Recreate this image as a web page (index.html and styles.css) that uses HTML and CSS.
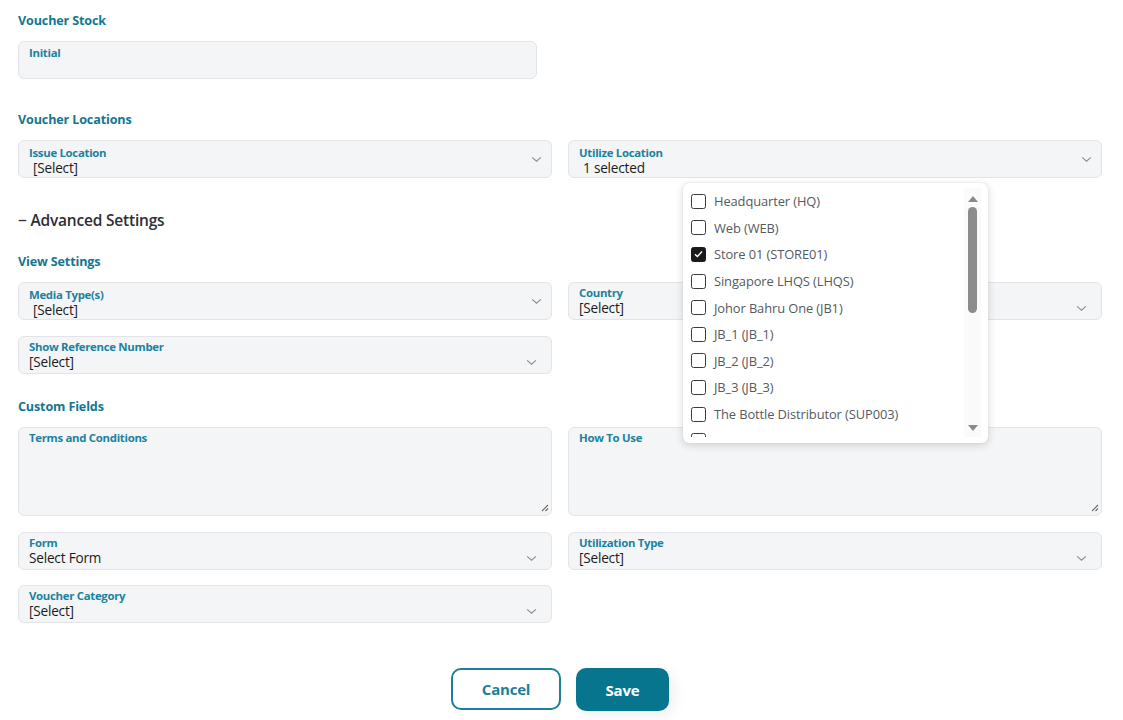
FILE: index.html
```html
<!DOCTYPE html>
<html>
<head>
<meta charset="utf-8">
<link rel="stylesheet" href="styles.css">
</head>
<body>
<div class="page">
  <h3 class="sec sec-first">Voucher Stock</h3>
  <div class="row">
    <div class="field field-half input">
      <div class="lbl">Initial</div>
      <div class="val"></div>
    </div>
  </div>

  <h3 class="sec sec-loc">Voucher Locations</h3>
  <div class="row two">
    <div class="field multi">
      <div class="lbl">Issue Location</div>
      <div class="val">[Select]</div>
      <svg class="chev" viewBox="0 0 12 8"><path d="M1 1.5 L6 6 L11 1.5"/></svg>
    </div>
    <div class="field multi">
      <div class="lbl">Utilize Location</div>
      <div class="val">1 selected</div>
      <svg class="chev" viewBox="0 0 12 8"><path d="M1 1.5 L6 6 L11 1.5"/></svg>
      <div class="dropdown">
        <div class="opts">
          <div class="opt"><span class="cb"></span>Headquarter (HQ)</div>
          <div class="opt"><span class="cb"></span>Web (WEB)</div>
          <div class="opt"><span class="cb on"><svg viewBox="0 0 14 14"><path d="M3.2 7.2 L5.8 9.8 L10.8 4.4"/></svg></span>Store 01 (STORE01)</div>
          <div class="opt"><span class="cb"></span>Singapore LHQS (LHQS)</div>
          <div class="opt"><span class="cb"></span>Johor Bahru One (JB1)</div>
          <div class="opt"><span class="cb"></span>JB_1 (JB_1)</div>
          <div class="opt"><span class="cb"></span>JB_2 (JB_2)</div>
          <div class="opt"><span class="cb"></span>JB_3 (JB_3)</div>
          <div class="opt"><span class="cb"></span>The Bottle Distributor (SUP003)</div>
          <div class="opt"><span class="cb"></span></div>
        </div>
        <div class="sbar">
          <span class="arr up"></span>
          <span class="thumb"></span>
          <span class="arr down"></span>
        </div>
      </div>
    </div>
  </div>

  <h2 class="adv">&minus; Advanced Settings</h2>

  <h3 class="sec sec-view">View Settings</h3>
  <div class="row two">
    <div class="field multi">
      <div class="lbl">Media Type(s)</div>
      <div class="val">[Select]</div>
      <svg class="chev" viewBox="0 0 12 8"><path d="M1 1.5 L6 6 L11 1.5"/></svg>
    </div>
    <div class="field single">
      <div class="lbl">Country</div>
      <div class="val">[Select]</div>
      <svg class="chev" viewBox="0 0 12 8"><path d="M1 1.5 L6 6 L11 1.5"/></svg>
    </div>
  </div>
  <div class="row two gap16">
    <div class="field single">
      <div class="lbl">Show Reference Number</div>
      <div class="val">[Select]</div>
      <svg class="chev" viewBox="0 0 12 8"><path d="M1 1.5 L6 6 L11 1.5"/></svg>
    </div>
  </div>

  <h3 class="sec sec-custom">Custom Fields</h3>
  <div class="row two">
    <div class="field area">
      <div class="lbl">Terms and Conditions</div>
      <svg class="grip" viewBox="0 0 8 8"><path d="M7 1 L1 7 M7 4.5 L4.5 7"/></svg>
    </div>
    <div class="field area">
      <div class="lbl">How To Use</div>
      <svg class="grip" viewBox="0 0 8 8"><path d="M7 1 L1 7 M7 4.5 L4.5 7"/></svg>
    </div>
  </div>
  <div class="row two gap16">
    <div class="field single">
      <div class="lbl">Form</div>
      <div class="val">Select Form</div>
      <svg class="chev" viewBox="0 0 12 8"><path d="M1 1.5 L6 6 L11 1.5"/></svg>
    </div>
    <div class="field single">
      <div class="lbl">Utilization Type</div>
      <div class="val">[Select]</div>
      <svg class="chev" viewBox="0 0 12 8"><path d="M1 1.5 L6 6 L11 1.5"/></svg>
    </div>
  </div>
  <div class="row two gap15">
    <div class="field single">
      <div class="lbl">Voucher Category</div>
      <div class="val">[Select]</div>
      <svg class="chev" viewBox="0 0 12 8"><path d="M1 1.5 L6 6 L11 1.5"/></svg>
    </div>
  </div>

  <div class="actions">
    <button class="btn cancel">Cancel</button>
    <button class="btn save">Save</button>
  </div>
</div>
</body>
</html>
```

FILE: styles.css
```css
* { box-sizing: border-box; }
html, body { margin: 0; padding: 0; background: #ffffff; }
body {
  font-family: "Open Sans", "Noto Sans", sans-serif;
  color: #222;
  width: 1123px;
  height: 720px;
  overflow: hidden;
}
.page {
  padding: 11px 21px 0 18px;
}
.sec {
  margin: 0;
  font-size: 12.6px;
  font-weight: 700;
  line-height: 20px;
  color: #137791;
  letter-spacing: -0.15px;
}
.sec-loc { margin-top: 31px; }
.sec-view { margin-top: 20px; }
.sec-custom { margin-top: 23px; }
.adv {
  margin: 30px 0 0 0;
  font-size: 15.5px;
  font-weight: 600;
  line-height: 24px;
  color: #2b2f33;
  letter-spacing: -0.2px;
}
.row {
  display: grid;
  grid-template-columns: 1fr 1fr;
  column-gap: 16px;
  margin-top: 10px;
}
.row.gap16 { margin-top: 16px; }
.row.gap15 { margin-top: 15px; }
.field {
  position: relative;
  background: #f4f5f7;
  border: 1px solid #e2e4e8;
  border-radius: 6px;
  height: 38px;
  padding: 4px 10px 0 10px;
}
.field-half { grid-column: 1 / 2; width: 519px; }
.lbl {
  font-size: 11.4px;
  font-weight: 700;
  line-height: 16px;
  color: #1c82a0;
  letter-spacing: -0.3px;
}
.input { padding-top: 3px; }
.val {
  font-size: 13.6px;
  line-height: 17px;
  margin-top: -2px;
  color: #1b1b1b;
  letter-spacing: -0.2px;
  white-space: nowrap;
}
.multi { padding-top: 4px; }
.multi .val { padding-left: 4px; }
.single { padding-top: 2px; }
.chev {
  position: absolute;
  width: 11px;
  height: 7px;
  fill: none;
  stroke: #8a8d91;
  stroke-width: 1.3;
}
.multi .chev { right: 9px; top: 15px; }
.single .chev { right: 14px; top: 22px; }
.area { height: 89px; padding-top: 2px; }
.grip {
  position: absolute;
  right: 2px;
  bottom: 3px;
  width: 8px;
  height: 8px;
  fill: none;
  stroke: #6b6b6b;
  stroke-width: 1.1;
}

/* dropdown overlay */
.dropdown {
  position: absolute;
  left: 114px;
  top: 42px;
  width: 305px;
  height: 260px;
  background: #fff;
  border-radius: 6px;
  box-shadow: 0 2px 8px rgba(0,0,0,0.16), 0 0 1px rgba(0,0,0,0.18);
  display: flex;
  padding: 5px 6px 6px 0;
  z-index: 5;
}
.opts {
  flex: 1;
  overflow: hidden;
  padding-top: 0;
}
.opt {
  height: 26.6px;
  display: flex;
  align-items: center;
  padding-left: 8px;
  font-size: 12.9px;
  color: #555a60;
  white-space: nowrap;
  letter-spacing: -0.1px;
}
.cb {
  width: 15px;
  height: 15px;
  border: 1.4px solid #3a3a3a;
  border-radius: 2.5px;
  margin-right: 8px;
  flex: none;
  background: #fff;
  display: flex;
  align-items: center;
  justify-content: center;
}
.cb.on { background: #1a1a1a; border-color: #1a1a1a; }
.cb svg {
  width: 14px;
  height: 14px;
  fill: none;
  stroke: #fff;
  stroke-width: 1.5;
}
.sbar {
  width: 17px;
  flex: none;
  background: #fafafa;
  position: relative;
  display: flex;
  flex-direction: column;
  align-items: center;
  margin-right: 1px;
}
.arr {
  width: 0;
  height: 0;
  border-left: 5px solid transparent;
  border-right: 5px solid transparent;
  margin-top: 8px;
}
.arr.up { border-bottom: 6px solid #8a8a8a; }
.arr.down { border-top: 6px solid #8a8a8a; margin-top: auto; margin-bottom: 6px; }
.thumb {
  width: 9px;
  height: 106px;
  background: #8c8c8c;
  border-radius: 5px;
  margin-top: 5px;
}

/* actions */
.actions {
  display: flex;
  justify-content: center;
  gap: 15px;
  margin-top: 45px;
}
.btn {
  font-family: "Open Sans", "Noto Sans", sans-serif;
  font-size: 15px;
  font-weight: 700;
  border-radius: 10px;
  height: 42px;
  cursor: pointer;
  letter-spacing: -0.2px;
}
.cancel {
  width: 110px;
  background: #fff;
  color: #1d7f99;
  border: 2px solid #1d7f99;
}
.save {
  width: 93px;
  height: 43px;
  background: #08758f;
  color: #fff;
  border: none;
  box-shadow: 4px 4px 14px rgba(0,0,0,0.07);
}
```
